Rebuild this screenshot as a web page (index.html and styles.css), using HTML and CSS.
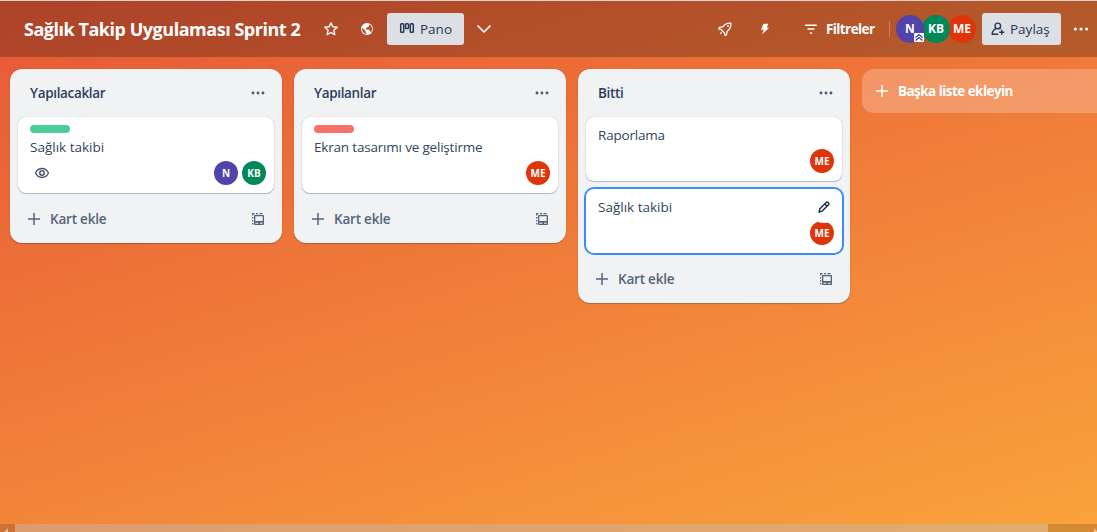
FILE: index.html
```html
<!DOCTYPE html>
<html lang="tr">
<head>
<meta charset="utf-8">
<title>Sağlık Takip Uygulaması Sprint 2</title>
<link rel="stylesheet" href="styles.css">
</head>
<body>
<svg width="0" height="0" class="defs">
  <symbol id="dots" viewBox="0 0 16 16"><g fill="currentColor"><circle cx="3" cy="8" r="1.4"/><circle cx="8" cy="8" r="1.4"/><circle cx="13" cy="8" r="1.4"/></g></symbol>
  <symbol id="plus" viewBox="0 0 16 16"><path d="M8 2v12M2 8h12" stroke="currentColor" stroke-width="1.5" fill="none"/></symbol>
  <symbol id="template" viewBox="0 0 16 16"><path fill="currentColor" fill-rule="evenodd" d="M5 4h8a1 1 0 0 1 1 1v8a1 1 0 0 1-1 1H5a1 1 0 0 1-1-1V5a1 1 0 0 1 1-1zM5.300 5.300v4.700h7.400V5.300zM5.300 11.700v1h3v-1zM10 11.700v1h2.700v-1z"/><path d="M2.700 13.500V12M2.700 10.500V9M2.700 7.500V6M2.700 4.500V2.700H4.500M6 2.700h2M9.500 2.700h3" fill="none" stroke="currentColor" stroke-width="1.300"/></symbol>
</svg>
<div class="board">
  <header class="topbar">
    <div class="topbar-left">
      <h1 class="title">Sağlık Takip Uygulaması Sprint 2</h1>
      <svg class="star" width="16" height="16" viewBox="0 0 16 16"><path d="M8 1.800l1.800 4 4.400.5-3.300 3 .9 4.300L8 11.500l-3.800 2.100.9-4.300-3.300-3 4.400-.5z" fill="none" stroke="currentColor" stroke-width="1.400" stroke-linejoin="round"/></svg>
      <svg class="globe" width="16" height="16" viewBox="0 0 16 16"><circle cx="8" cy="8" r="6" fill="currentColor"/><path d="M3.300 6.700l3.200 3.200v1.300l.9.900v.9C4.600 12.700 2.600 9.900 3.300 6.700zM12.200 11.200c-.2-.5-.6-.9-1.200-.9h-.6V8.500H6.600V7.300h1.300V6h1.300l1-1V3.500c2.900 1.200 3.900 5 2 7.700z" fill="#b14c2a"/></svg>
      <button class="view-button">
        <svg width="16" height="16" viewBox="0 0 16 16"><g fill="none" stroke="currentColor" stroke-width="1.500"><rect x="1.700" y="2.700" width="3" height="8.500" rx=".8"/><rect x="6.500" y="2.700" width="3" height="4.800" rx=".8"/><rect x="11.300" y="2.700" width="3" height="8.500" rx=".8"/></g></svg>
        <span class="view-label">Pano</span>
      </button>
      <svg class="chevron" width="16" height="16" viewBox="0 0 16 16"><path d="M2 5l6 6 6-6" fill="none" stroke="currentColor" stroke-width="1.700" stroke-linecap="round" stroke-linejoin="round"/></svg>
    </div>
    <div class="topbar-right">
      <svg class="rocket" width="16" height="16" viewBox="0 0 16 16"><path d="M13.800 2.200C10 2 7.500 3.400 5.700 5.800L2.300 6.500 1.800 7.800l2.500.9 3 3 .8 2.700 1.300-.6.800-3.500c2.600-1.900 3.900-4.300 3.600-8.100zM4.500 11.500l-1.300 1.300" fill="none" stroke="currentColor" stroke-width="1.300" stroke-linejoin="round"/><circle cx="11" cy="5" r=".9" fill="currentColor"/></svg>
      <svg class="bolt" width="16" height="16" viewBox="0 0 16 16"><path d="M6.500 2.800h5L9.700 6.700h2.500L5 13.500l1.700-4.700H4z" fill="currentColor"/></svg>
      <div class="filter">
        <svg width="16" height="16" viewBox="0 0 16 16"><path d="M2.200 4.200h11.600M4.500 8.100h7M6.900 12h2.200" fill="none" stroke="currentColor" stroke-width="1.500"/></svg>
        <span class="filter-label">Filtreler</span>
      </div>
      <span class="divider"></span>
      <div class="members">
        <span class="avatar large purple">N<svg class="admin" width="10" height="9" viewBox="0 0 10 9"><rect width="10" height="9" rx="1" fill="#fff"/><path d="M1.500 4.500L5 1.500l3.500 3M1.500 7.500L5 4.500l3.500 3" fill="none" stroke="#4338a0" stroke-width="1.200"/></svg></span>
        <span class="avatar large green">KB</span>
        <span class="avatar large red">ME</span>
      </div>
      <button class="share-button">
        <svg width="16" height="16" viewBox="0 0 16 16"><g fill="none" stroke="currentColor" stroke-width="1.400"><circle cx="7.800" cy="4.900" r="2.800"/><path d="M8.300 13.200H2.200c0-2.800 1.200-4.500 4-5.800M9.300 7.200l1.200 1M11.800 8.800v5M9.300 11.300h5"/></g></svg>
        <span class="share-label">Paylaş</span>
      </button>
      <svg class="menu" width="18" height="18"><use href="#dots"/></svg>
    </div>
  </header>

  <main class="lists">
    <section class="list">
      <div class="list-header"><h2>Yapılacaklar</h2><svg width="16" height="16"><use href="#dots"/></svg></div>
      <div class="cards">
        <article class="card">
          <span class="label mint"></span>
          <p class="short">Sağlık takibi</p>
          <div class="card-foot">
            <svg class="eye" width="16" height="16" viewBox="0 0 16 16"><path d="M1.500 8C3 4.900 5.200 3.500 8 3.500S13 4.900 14.500 8C13 11.100 10.800 12.500 8 12.500S3 11.100 1.500 8z" fill="none" stroke="currentColor" stroke-width="1.300"/><circle cx="8" cy="8" r="2.200" fill="none" stroke="currentColor" stroke-width="1.500"/></svg>
            <div class="assignees"><span class="avatar purple">N</span><span class="avatar green">KB</span></div>
          </div>
        </article>
      </div>
      <div class="list-footer"><svg width="16" height="16"><use href="#plus"/></svg><span>Kart ekle</span><svg class="template" width="16" height="16"><use href="#template"/></svg></div>
    </section>
    <section class="list">
      <div class="list-header"><h2>Yapılanlar</h2><svg width="16" height="16"><use href="#dots"/></svg></div>
      <div class="cards">
        <article class="card">
          <span class="label coral"></span>
          <p>Ekran tasarımı ve geliştirme</p>
          <div class="card-foot"><div class="assignees"><span class="avatar red">ME</span></div></div>
        </article>
      </div>
      <div class="list-footer"><svg width="16" height="16"><use href="#plus"/></svg><span>Kart ekle</span><svg class="template" width="16" height="16"><use href="#template"/></svg></div>
    </section>
    <section class="list">
      <div class="list-header"><h2>Bitti</h2><svg width="16" height="16"><use href="#dots"/></svg></div>
      <div class="cards">
        <article class="card">
          <p>Raporlama</p>
          <div class="card-foot"><div class="assignees"><span class="avatar red">ME</span></div></div>
        </article>
        <article class="card selected">
          <p class="short">Sağlık takibi</p>
          <div class="card-foot"><div class="assignees"><span class="avatar red">ME</span></div></div>
          <span class="edit"><svg width="16" height="16" viewBox="0 0 16 16"><path d="M3 13l.9-3.200 6.300-6.300c.6-.6 1.100-.6 1.700 0l.6.600c.6.600.6 1.100 0 1.700l-6.300 6.300zM8.800 4.900l2.300 2.300" fill="none" stroke="currentColor" stroke-width="1.400" stroke-linejoin="round"/></svg></span>
        </article>
      </div>
      <div class="list-footer"><svg width="16" height="16"><use href="#plus"/></svg><span>Kart ekle</span><svg class="template" width="16" height="16"><use href="#template"/></svg></div>
    </section>
    <div class="add-list"><svg width="16" height="16"><use href="#plus"/></svg><span>Başka liste ekleyin</span></div>
  </main>

  <div class="scrollbar">
    <svg width="15" height="8" viewBox="0 0 15 8"><path d="M4 8l4-4v4z" fill="#e8b98f"/></svg>
    <span class="thumb"></span>
    <svg class="scroll-end" width="8" height="8" viewBox="0 0 8 8"><path d="M5 4v4h3V7z" fill="#e8c08f"/></svg>
  </div>
</div>
</body>
</html>
```
FILE: styles.css
```css
* { box-sizing: border-box; }
body { margin: 0; font-family: "Open Sans", "Noto Sans", sans-serif; font-size: 13.5px; line-height: 20px; color: #172b4d; overflow: hidden; }
h1, h2, p { margin: 0; white-space: nowrap; }
svg { display: block; flex: none; }
button { font: inherit; color: inherit; border: 0; padding: 0; }
.defs { position: absolute; }
.board { height: 532px; display: flex; flex-direction: column; background: linear-gradient(163deg, #e65736, #faa33c); }

.topbar { height: 57px; flex: none; border-top: 1px solid #d9d3d1; background: rgba(0, 0, 0, .24); background-clip: padding-box; color: #fff; display: flex; justify-content: space-between; align-items: center; padding: 0 7px 0 24px; }
.topbar-left, .topbar-right { display: flex; align-items: center; }
.title { width: 277px; font-size: 18px; line-height: 24px; font-weight: 700; letter-spacing: -.47px; }
.star { margin-left: 22px; }
.globe { margin-left: 20px; }
.view-button { height: 32px; width: 77px; margin-left: 12px; padding-left: 12px; border-radius: 3px; background: #dcdfe4; color: #253858; display: flex; align-items: center; gap: 5px; }
.view-label, .share-label { font-weight: 500; }
.chevron { margin-left: 12px; }
.rocket { margin-right: 24px; }
.bolt { margin-right: 30px; }
.filter { display: flex; align-items: center; gap: 7px; width: 72px; }
.filter-label { font-weight: 700; letter-spacing: -.6px; }
.divider { width: 1px; height: 16px; margin: 0 6px 0 14px; background: rgba(255, 255, 255, .25); }
.members { display: flex; }
.avatar { width: 24px; height: 24px; border-radius: 50%; color: #fff; font-size: 10px; font-weight: 700; display: flex; align-items: center; justify-content: center; position: relative; }
.avatar.large { width: 28px; height: 28px; margin-right: -2px; font-size: 12px; }
.purple { background: #5243aa; }
.green { background: #00875a; }
.red { background: #de350b; }
.large.purple { z-index: 3; }
.large.green { z-index: 2; }
.admin { position: absolute; right: 0; bottom: 1px; }
.share-button { width: 79px; height: 32px; margin-left: 8px; padding-left: 8px; border-radius: 3px; background: #dcdfe4; color: #253858; display: flex; align-items: center; gap: 4px; }
.menu { margin-left: 11px; }

.lists { display: flex; align-items: flex-start; gap: 12px; padding: 12px 0 0 10px; flex: 1; overflow: hidden; }
.list { width: 272px; flex: none; border-radius: 12px; background: #f1f2f4; box-shadow: 0 1px 1px rgba(9, 30, 66, .25), 0 0 1px rgba(9, 30, 66, .3); padding: 0 8px 8px; color: #44546f; }
.list-header { height: 48px; display: flex; align-items: center; justify-content: space-between; padding: 0 8px 0 12px; }
.list-header h2 { font-size: 13.5px; line-height: 20px; font-weight: 600; letter-spacing: -.34px; color: #2c3e5d; }
.cards { display: flex; flex-direction: column; gap: 8px; }
.card { position: relative; border-radius: 8px; background: #fff; padding: 8px; padding-left: 12px; box-shadow: 0 1px 1px rgba(9, 30, 66, .25), 0 0 1px rgba(9, 30, 66, .31); color: #172b4d; }
.card.selected { box-shadow: 0 0 0 2px #388bff; }
.label { display: block; width: 40px; height: 8px; margin-bottom: 4px; border-radius: 4px; }
.mint { background: #4bce97; }
.coral { background: #f87168; }
.card p { font-weight: 400; letter-spacing: -.19px; color: #33445f; }
.card p.short { letter-spacing: 0; }
.card-foot { height: 24px; margin-top: 4px; display: flex; align-items: center; }
.eye { margin-left: 4px; color: #44546f; }
.assignees { display: flex; gap: 4px; margin-left: auto; }
.edit { position: absolute; top: 2px; right: 2px; width: 32px; height: 32px; border-radius: 50%; background: #fff; display: flex; align-items: center; justify-content: center; }
.list-footer { height: 32px; margin-top: 10px; padding: 0 8px; display: flex; align-items: center; gap: 8px; font-weight: 600; letter-spacing: -.2px; color: #54637c; }
.template { margin-left: auto; }
.add-list { width: 272px; height: 44px; flex: none; border-radius: 12px; background: rgba(255, 255, 255, .24); color: #fff; display: flex; align-items: center; gap: 8px; padding-left: 12px; font-weight: 700; letter-spacing: -.55px; white-space: nowrap; }

.scrollbar { height: 8px; flex: none; display: flex; background: rgba(0, 0, 0, .15); }
.thumb { width: 1033px; background: rgba(255, 255, 255, .3); }
.scroll-end { margin-left: auto; }
```
